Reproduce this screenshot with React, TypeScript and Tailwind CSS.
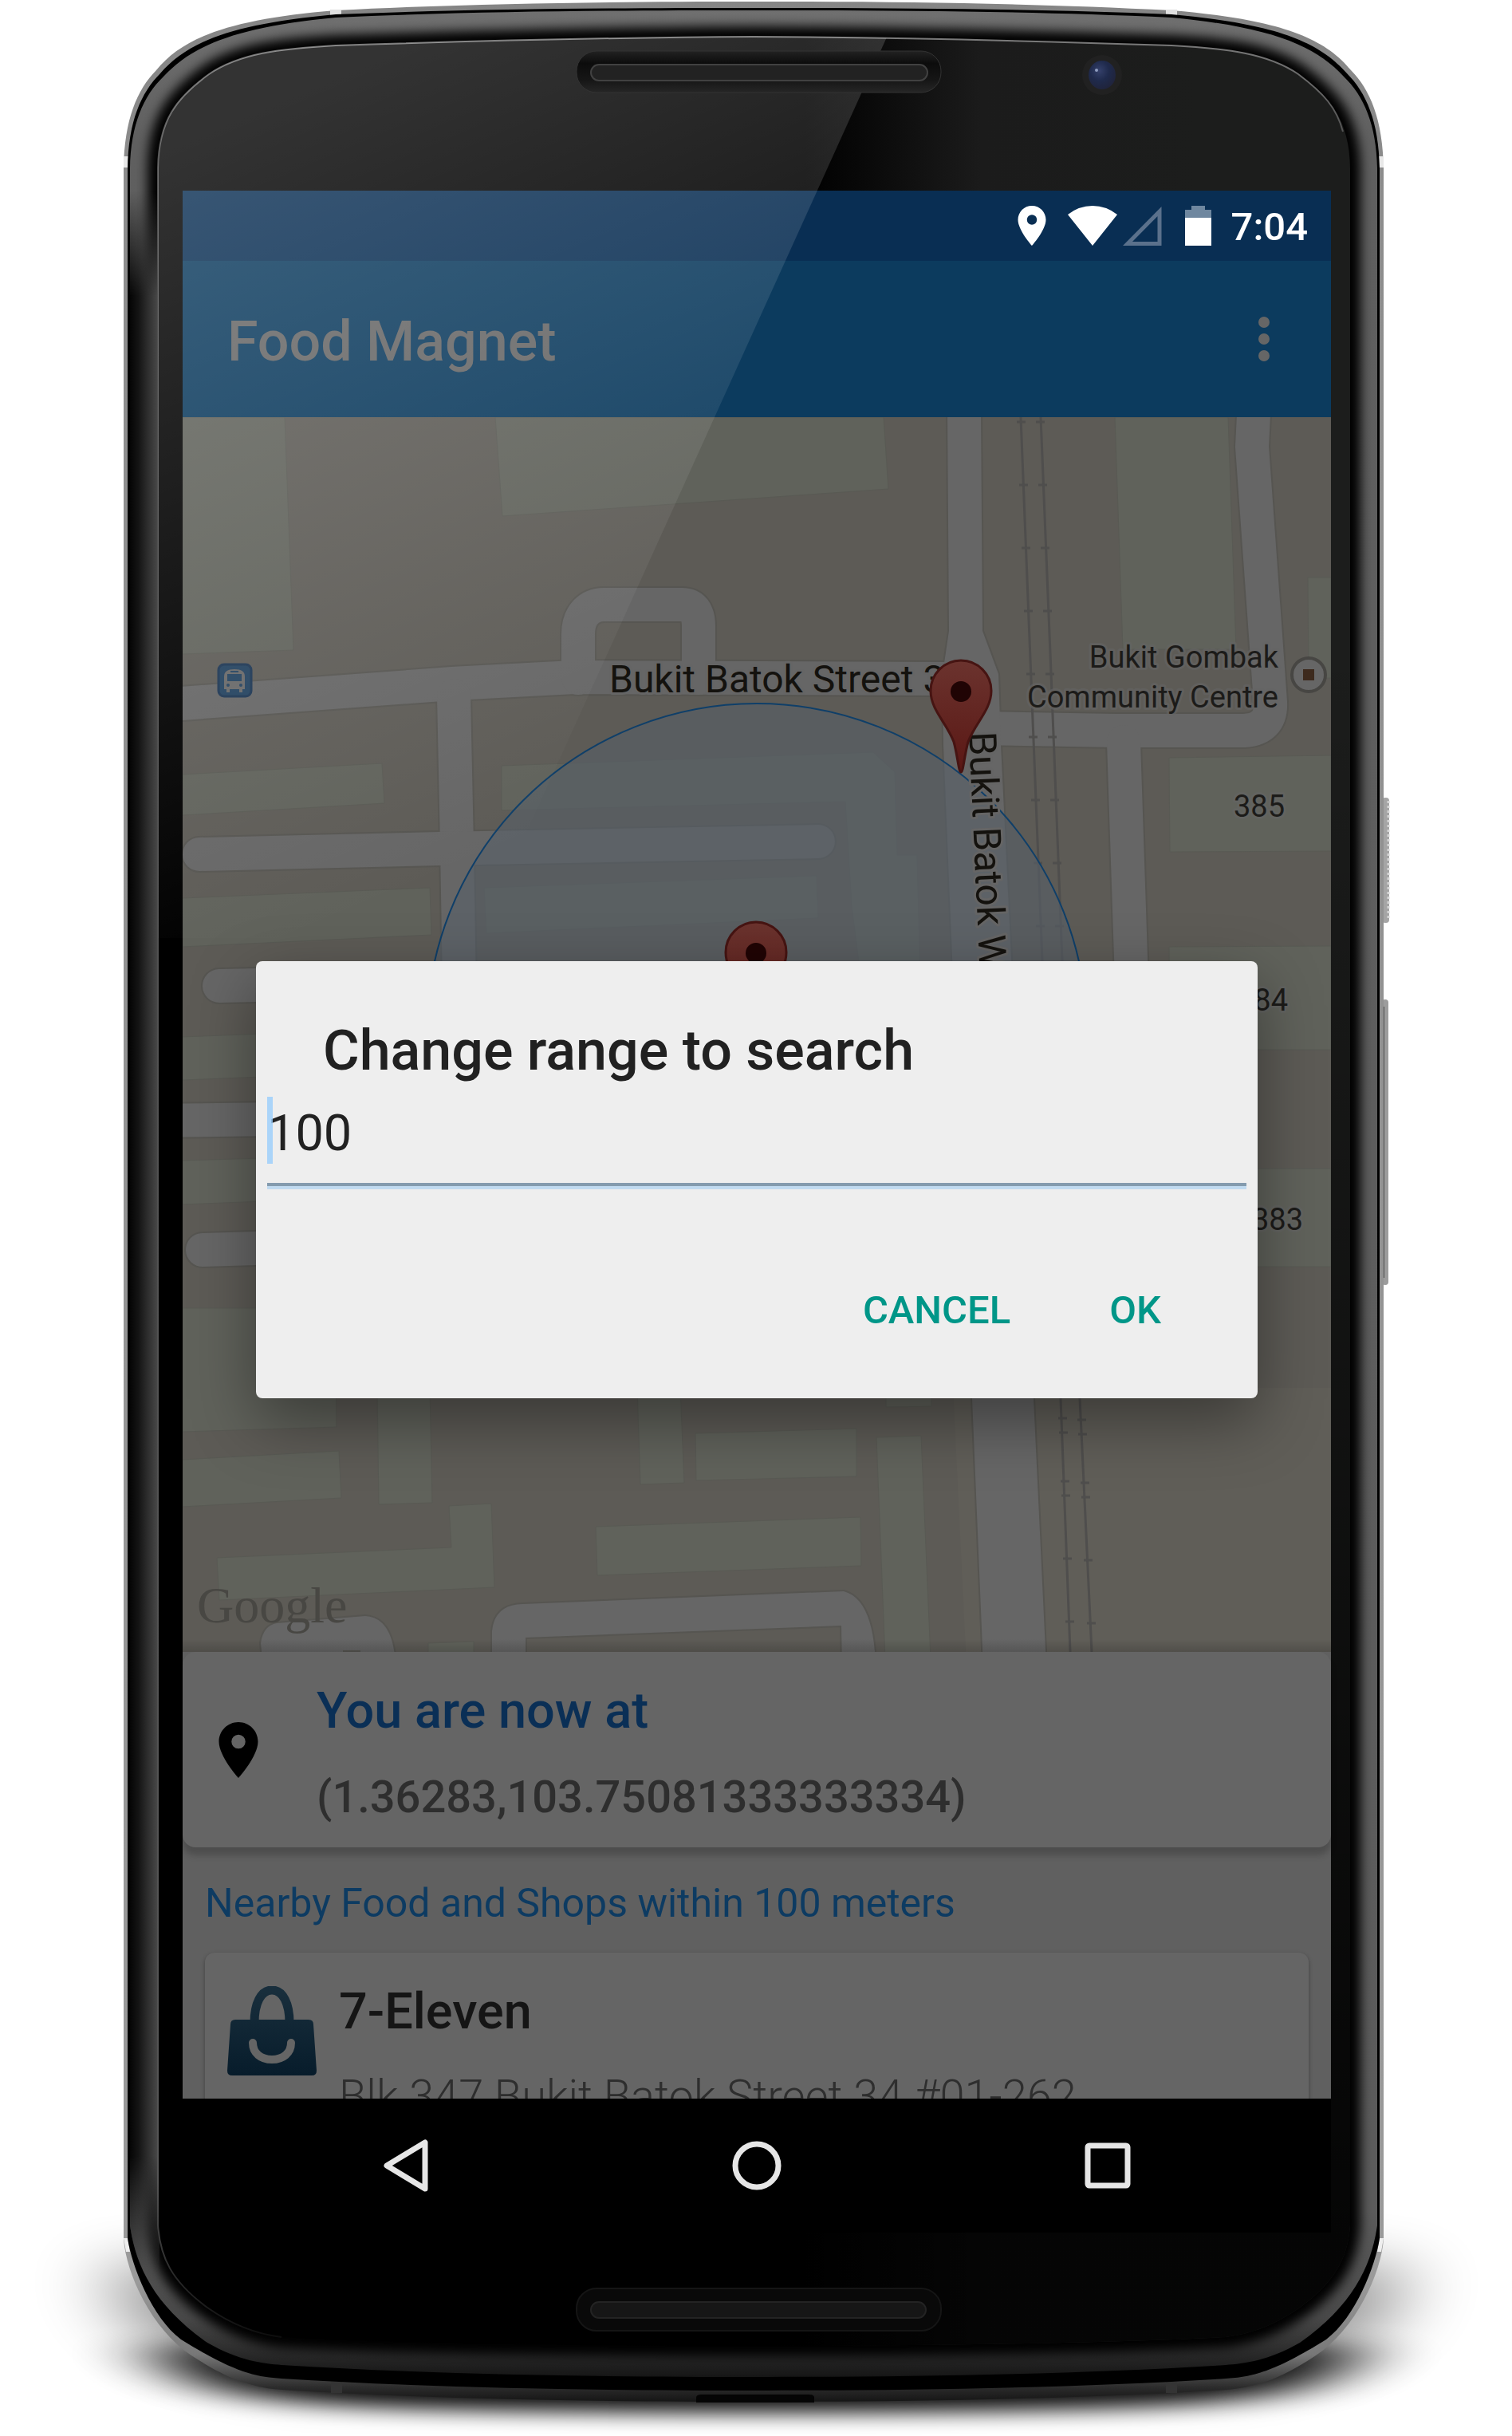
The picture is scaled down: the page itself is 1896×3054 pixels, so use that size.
import React, { useState } from "react";

const BODY =
  "M155 211C156 150 172 112 196 88C230 46 290 24 421 13C600 4 760 2 945 2C1130 2 1290 4 1469 13C1600 24 1660 46 1694 88C1718 112 1734 150 1735 211V2807C1732 2850 1700 2920 1650 2953C1600 2986 1572 2993 1537 2996C1350 3008 1130 3011 945 3011C760 3011 540 3008 353 2996C320 2993 290 2986 240 2953C190 2920 158 2850 155 2807Z";
const EDGE =
  "M160 211C161 152 177 116 201 92C236 52 290 30 421 18C600 11 760 10 945 10C1130 10 1290 11 1469 18C1600 30 1654 52 1689 92C1713 116 1729 152 1730 211V2806C1725 2840 1700 2905 1663 2933C1597 2974 1570 2980 1537 2982C1350 2994 1130 2997 945 2997C760 2997 540 2994 353 2982C320 2980 293 2974 227 2933C190 2905 165 2840 160 2806Z";
const RIM =
  "M163 211C164 156 180 120 205 96C240 58 294 34 421 22C600 14 760 13 945 13C1130 13 1290 14 1469 22C1596 34 1650 58 1685 96C1710 120 1726 156 1727 211V2790C1720 2840 1697 2890 1630 2937C1590 2960 1560 2963 1537 2965C1350 2977 1130 2980 945 2980C760 2980 540 2977 353 2965C330 2963 300 2960 260 2937C193 2890 170 2840 163 2790Z";
const GLASS =
  "M198 211C199 150 222 122 262 93C300 67 350 61 421 57C600 51 760 47 945 46C1130 47 1290 51 1469 57C1540 61 1590 67 1628 93C1668 122 1692 150 1693 211V2790C1690 2830 1675 2860 1630 2893C1600 2914 1570 2926 1537 2930C1400 2938 1130 2941 945 2941C760 2941 490 2938 353 2930C320 2926 290 2914 260 2893C215 2860 201 2830 198 2790Z";
const GLASS_HIGHLIGHT =
  "M353 2930C320 2926 290 2914 260 2893C215 2860 201 2830 198 2790V211C199 150 222 122 262 93C300 67 350 61 421 57C600 51 760 47 945 46C1130 47 1290 51 1469 57C1540 61 1590 67 1628 93C1660 117 1676 135 1684 165";

function PhoneShell() {
  return (
    <svg
      aria-hidden="true"
      className="absolute inset-0 size-full"
      viewBox="0 0 1896 3054"
      preserveAspectRatio="none"
    >
      <defs>
        <linearGradient id="metal" x1="0" y1="0" x2="0" y2="3012" gradientUnits="userSpaceOnUse">
          <stop offset="0" stopColor="#858585" />
          <stop offset="0.08" stopColor="#8d8d8d" />
          <stop offset="0.95" stopColor="#9a9a9a" />
          <stop offset="0.98" stopColor="#777" />
          <stop offset="0.994" stopColor="#2a2a2a" />
          <stop offset="1" stopColor="#141414" />
        </linearGradient>
        <linearGradient id="rim" x1="0" y1="0" x2="0" y2="2981" gradientUnits="userSpaceOnUse">
          <stop offset="0" stopColor="#717171" />
          <stop offset="0.06" stopColor="#5f5f5f" />
          <stop offset="0.93" stopColor="#5b5b5b" />
          <stop offset="0.975" stopColor="#484848" />
          <stop offset="1" stopColor="#151515" />
        </linearGradient>
        <linearGradient id="leftRim" x1="163" y1="0" x2="198" y2="0" gradientUnits="userSpaceOnUse">
          <stop offset="0" stopColor="#050505" />
          <stop offset="0.3" stopColor="#141414" />
          <stop offset="1" stopColor="#494949" />
        </linearGradient>
        <linearGradient id="leftFade" x1="0" y1="240" x2="0" y2="2860" gradientUnits="userSpaceOnUse">
          <stop offset="0" stopColor="#fff" stopOpacity="0" />
          <stop offset="0.05" stopColor="#fff" />
          <stop offset="0.94" stopColor="#fff" />
          <stop offset="1" stopColor="#fff" stopOpacity="0" />
        </linearGradient>
        <linearGradient id="glassX" x1="1010" y1="0" x2="1500" y2="0" gradientUnits="userSpaceOnUse">
          <stop offset="0" stopColor="#000" />
          <stop offset="0.45" stopColor="#1b1b1b" />
          <stop offset="1" stopColor="#1c1d1c" />
        </linearGradient>
        <linearGradient id="glassY" x1="0" y1="800" x2="0" y2="2800" gradientUnits="userSpaceOnUse">
          <stop offset="0" stopColor="#000" stopOpacity="0" />
          <stop offset="1" stopColor="#000" stopOpacity="0.82" />
        </linearGradient>
        <linearGradient id="edgeLine" x1="0" y1="0" x2="0" y2="2941" gradientUnits="userSpaceOnUse">
          <stop offset="0" stopColor="#8a8a8a" />
          <stop offset="0.06" stopColor="#505050" />
          <stop offset="0.93" stopColor="#555" />
          <stop offset="1" stopColor="#0a0a0a" />
        </linearGradient>
        <radialGradient id="lens" cx="0.4" cy="0.35" r="0.7">
          <stop offset="0" stopColor="#34406a" />
          <stop offset="0.5" stopColor="#1f2a4c" />
          <stop offset="1" stopColor="#20233a" />
        </radialGradient>
        <filter id="blurWide" x="-20%" y="-60%" width="140%" height="220%">
          <feGaussianBlur stdDeviation="48 32" />
        </filter>
        <filter id="blurNear" x="-20%" y="-60%" width="140%" height="220%">
          <feGaussianBlur stdDeviation="55 13" />
        </filter>
        <filter id="blurRim" x="-5%" y="-5%" width="110%" height="110%">
          <feGaussianBlur stdDeviation="7" />
        </filter>
        <clipPath id="rimClip">
          <path d={RIM} />
        </clipPath>
        <mask id="leftMask" maskUnits="userSpaceOnUse" x="150" y="200" width="60" height="2700">
          <rect x="150" y="240" width="60" height="2620" fill="url(#leftFade)" />
        </mask>
      </defs>

      <path
        d="M130 2840H1766C1750 2920 1700 2970 1500 2985H396C200 2970 150 2920 130 2840Z"
        fill="#000"
        opacity="0.42"
        filter="url(#blurWide)"
      />
      <path
        d="M200 2940H1696C1680 2990 1620 3010 1400 3018C1200 3026 700 3026 496 3018C280 3010 220 2990 200 2940Z"
        fill="#000"
        opacity="0.95"
        filter="url(#blurNear)"
      />

      <rect x="1733" y="1000" width="9" height="157" rx="4" fill="#a5a5a5" />
      <path d="M1741 1004V1154" stroke="#d5d5d5" strokeWidth="3" strokeDasharray="3 3" />
      <rect x="1733" y="1253" width="8" height="358" rx="4" fill="#9c9c9c" />
      <rect x="1733" y="1262" width="3" height="340" fill="#4d4d4d" />

      <path d={BODY} fill="url(#metal)" />
      <path d="M421 12V20M1469 12V20" stroke="#e0e0e0" strokeWidth="14" />
      <path d="M155 203H161M1729 203H1735" stroke="#e8e8e8" strokeWidth="14" />
      <path d="M155 2806L160 2806L163 2823L158 2823ZM1735 2806L1730 2806L1727 2823L1732 2823Z" fill="#eee" />
      <path d="M422 2986V3000M1469 2986V3000" stroke="#343434" strokeWidth="14" />
      <path d="M873 3012V3006Q873 3002 880 3002H1014Q1021 3002 1021 3006V3012Z" fill="#050505" />
      <path d={EDGE} fill="#000" />
      <path d={RIM} fill="url(#rim)" />
      <g clipPath="url(#rimClip)">
        <path d={GLASS} fill="#000" stroke="#000" strokeWidth="26" filter="url(#blurRim)" />
        <rect x="160" y="240" width="40" height="2620" fill="url(#leftRim)" mask="url(#leftMask)" />
      </g>
      <path d={GLASS} fill="url(#glassX)" />
      <path d={GLASS} fill="url(#glassY)" />
      <path d={GLASS_HIGHLIGHT} fill="none" stroke="url(#edgeLine)" strokeWidth="2" />

      <circle cx="1382" cy="94" r="25" fill="#212121" />
      <ellipse cx="1382" cy="94" rx="17" ry="18" fill="url(#lens)" />
      <circle cx="1375" cy="88" r="2" fill="#8e9cc0" />
    </svg>
  );
}

function Gloss() {
  return (
    <svg
      aria-hidden="true"
      className="pointer-events-none absolute inset-0 size-full"
      viewBox="0 0 1896 3054"
      preserveAspectRatio="none"
    >
      <defs>
        <linearGradient id="gloss" x1="229" y1="180" x2="612" y2="1080" gradientUnits="userSpaceOnUse">
          <stop offset="0" stopColor="#fff" stopOpacity="0.2" />
          <stop offset="1" stopColor="#fff" stopOpacity="0" />
        </linearGradient>
        <linearGradient id="slot" x1="0" y1="0" x2="0" y2="1">
          <stop offset="0" stopColor="#222" />
          <stop offset="0.3" stopColor="#0c0c0c" />
          <stop offset="0.7" stopColor="#161616" />
          <stop offset="1" stopColor="#262626" />
        </linearGradient>
        <clipPath id="glassClip">
          <path d={GLASS} />
        </clipPath>
      </defs>
      <path d="M190 40H1115L600 1176H190Z" fill="url(#gloss)" clipPath="url(#glassClip)" />
      <rect x="723" y="64" width="457" height="52" rx="25" fill="url(#slot)" stroke="#333" strokeWidth="1" />
      <rect x="741" y="81" width="422" height="20" rx="10" fill="#222" stroke="#414141" strokeWidth="2" />
      <rect x="723" y="2869" width="457" height="53" rx="25" fill="#090909" stroke="#151515" strokeWidth="2" />
      <rect x="741" y="2886" width="420" height="20" rx="10" fill="#161616" stroke="#232323" strokeWidth="2" />
    </svg>
  );
}

function PlaceIcon({ className }: { className: string }) {
  return (
    <svg aria-hidden="true" viewBox="5 2 14 20" className={className} fill="currentColor">
      <path d="M12 2C8.13 2 5 5.13 5 9c0 5.25 7 13 7 13s7-7.75 7-13c0-3.87-3.13-7-7-7zm0 9.5a2.5 2.5 0 0 1 0-5 2.5 2.5 0 0 1 0 5z" />
    </svg>
  );
}

function StatusBar() {
  return (
    <div className="flex h-[88px] items-center justify-end bg-[#092e53] pr-[29px] text-white">
      <PlaceIcon className="h-[50px] w-[36px]" />
      <svg aria-label="Wi-Fi" viewBox="0 0 62 50" className="ml-[27px] h-[50px] w-[62px]">
        <path d="M0 11Q14 0 31 0T62 11L31 50Z" fill="currentColor" />
      </svg>
      <svg aria-label="No signal" viewBox="0 0 50 50" className="ml-[6px] h-[50px] w-[50px]">
        <path d="M7 47.500H47V7Z" fill="none" stroke="#5b718c" strokeWidth="5" />
      </svg>
      <svg aria-label="Battery" viewBox="0 0 33 50" className="ml-[29px] h-[50px] w-[33px]">
        <path d="M8 0H25V5H33V15H0V5H8Z" fill="#6f879f" />
        <path d="M0 15H33V50H0Z" fill="currentColor" />
      </svg>
      <span className="ml-[25px] pt-1 text-[49px] leading-[56px] font-medium">7:04</span>
    </div>
  );
}

function AppBar() {
  return (
    <header className="flex h-[196px] items-center justify-between bg-[#0c3b5e] pr-[56px] pl-[56px] text-[#666]">
      <h1 className="pt-[6px] text-[70px] leading-[84px] font-medium">Food Magnet</h1>
      <button aria-label="More options" className="flex w-14 flex-col items-center gap-[7px]">
        <span className="size-[14px] rounded-full bg-current" />
        <span className="size-[14px] rounded-full bg-current" />
        <span className="size-[14px] rounded-full bg-current" />
      </button>
    </header>
  );
}

function MapPin({ x, y }: { x: number; y: number }) {
  return (
    <g transform={`translate(${x} ${y})`}>
      <path
        d="M0 0C-3 0 -4 -20 -9 -38C-18 -62 -38 -78 -38 -102A38 38 0 0 1 38 -102C38 -78 18 -62 9 -38C4 -20 3 0 0 0Z"
        fill="url(#pinFill)"
        stroke="#461412"
        strokeWidth="3"
      />
      <circle cy="-101" r="13" fill="#200404" />
    </g>
  );
}

const ROADS = [
  { d: "M200 884L567 857L720 849L1190 851", w: 42 },
  { d: "M725 850V795C725 770 740 758 757 758H855Q876 758 876 785V850", w: 42 },
  { d: "M569 872L573 1060L577 1300", w: 42 },
  { d: "M250 1071L551 1064L1026 1055", w: 42 },
  { d: "M275 1236L420 1233", w: 42 },
  { d: "M200 1405L420 1402", w: 42 },
  { d: "M254 1567L420 1562", w: 42 },
  { d: "M1230 913L1400 916L1560 916Q1595 914 1593 880L1570 560L1573 500", w: 42 },
  { d: "M1409 930L1420 1260", w: 42 },
];
const MAIN_ROAD =
  "M1188 510H1230L1232 791L1252 845L1255 934L1268 1200L1296 1753L1312 2090H1233L1219 1753L1194 1200L1183 934L1182 845L1190 791Z";
const LOWER_ROAD =
  "M617 2090V2045Q620 2012 655 2011L1058 1995Q1096 2005 1098 2090H1056L1055 2038L659 2053V2090Z";
const LOWER_LANE = "M327 2060Q330 2038 347 2035L458 2026Q494 2028 496 2090H330Z";

const PARKS = [
  "M229 523H357L368 815L229 820Z",
  "M621 523H1108L1114 613L630 647Z",
  "M229 971L479 957L482 1007L229 1022Z",
  "M229 1126L539 1113L541 1172L229 1187Z",
  "M629 960L1095 943L1122 968L1125 1072H1150L1154 1230H1080L1068 1136L1060 1005L629 1016Z",
  "M607 1113L1024 1098L1026 1151L610 1170Z",
  "M229 1300L330 1296V1350L229 1354Z",
  "M229 1455L330 1452V1506L229 1510Z",
  "M1398 523H1540L1550 814H1408Z",
  "M1640 724H1669V850H1641Z",
  "M1466 950L1669 947V1067L1467 1068Z",
  "M1466 1187L1669 1186V1316H1467Z",
  "M1500 1465H1669V1588H1500Z",
  "M229 1640H421L422 1789L229 1795Z",
  "M229 1830L425 1819L428 1878L229 1889Z",
  "M473 1740H539L542 1884L475 1886Z",
  "M799 1740H853L858 1859L803 1861Z",
  "M872 1797L1074 1791V1851L873 1856Z",
  "M563 1888L616 1885L620 1990L275 2006L272 1953L566 1940Z",
  "M747 1914L1079 1902L1080 1963L749 1975Z",
  "M1099 1802L1155 1800L1167 2080H1110Z",
  "M1111 1740H1168V1763L1111 1764Z",
  "M537 2060L594 2058V2080H537Z",
];

const TICKS = [0, 1, 2, 3, 4, 5, 6, 7, 8];
const LOWER_TICKS = [1778, 1796, 1857, 1875, 1954, 2033];

function MapView() {
  return (
    <svg
      role="img"
      aria-label="Map of Bukit Batok"
      className="block h-[1548px] w-full bg-[#5d5b56]"
      viewBox="229 523 1440 1548"
      preserveAspectRatio="xMidYMid slice"
    >
      <defs>
        <linearGradient id="pinFill" x1="0" y1="0" x2="0" y2="1">
          <stop offset="0" stopColor="#6b332e" />
          <stop offset="1" stopColor="#5a1714" />
        </linearGradient>
        <linearGradient id="cardShade" x1="0" y1="0" x2="0" y2="1">
          <stop offset="0" stopColor="#000" stopOpacity="0" />
          <stop offset="1" stopColor="#000" stopOpacity="0.16" />
        </linearGradient>
      </defs>

      <path d="M1195 1740H1669V2071H1211Z" fill="#605e58" />
      {PARKS.map((d) => (
        <path key={d} d={d} fill="#60625b" stroke="#595a54" strokeWidth="1" />
      ))}

      <g fill="none" stroke="#565551" strokeLinecap="round" strokeLinejoin="round">
        {ROADS.map((r) => (
          <path key={r.d} d={r.d} strokeWidth={r.w + 4} />
        ))}
        <path d={MAIN_ROAD} strokeWidth="4" />
        <path d={LOWER_ROAD} strokeWidth="4" />
        <path d={LOWER_LANE} strokeWidth="4" />
      </g>
      <g fill="none" stroke="#666" strokeLinecap="round" strokeLinejoin="round">
        {ROADS.map((r) => (
          <path key={r.d} d={r.d} strokeWidth={r.w} />
        ))}
      </g>
      <g fill="#666">
        <path d={MAIN_ROAD} />
        <path d={LOWER_ROAD} />
        <path d={LOWER_LANE} />
      </g>
      <path d="M452 2070H430" stroke="#565551" strokeWidth="2" />

      <g stroke="#4f4e4d" strokeWidth="3" fill="none">
        <path d="M1280 523L1307 1205L1330 1753L1342 2071" />
        <path d="M1305 523L1318 844L1332 1205L1354 1753L1369 2071" />
        {TICKS.map((i) => (
          <path key={i} d={`M${1275 + i * 3} ${529 + i * 79}h11M${1299 + i * 3} ${529 + i * 79}h11`} />
        ))}
        {LOWER_TICKS.map((y) => (
          <path
            key={y}
            d={`M${1326 + Math.round((y - 1753) / 27)} ${y}h11M${1350 + Math.round((y - 1753) / 22)} ${y + 2}h11`}
          />
        ))}
      </g>

      <circle cx="949" cy="1296" r="414" fill="#576067" fillOpacity="0.62" stroke="#0f3f69" strokeWidth="2" />

      <g
        fontFamily="Roboto, sans-serif"
        fill="#14120e"
        stroke="#656565"
        strokeWidth="6"
        strokeLinejoin="round"
        paintOrder="stroke"
      >
        <text x="764" y="868" fontSize="48">Bukit Batok Street 34</text>
        <text fontSize="48" transform="translate(1215 918) rotate(87.4)">Bukit Batok West</text>
        <g fontSize="38" fill="#1c1b19" strokeOpacity="0.6">
          <text x="1603" y="837" textAnchor="end">Bukit Gombak</text>
          <text x="1603" y="887" textAnchor="end">Community Centre</text>
          <text x="1611" y="1024" textAnchor="end">385</text>
          <text x="1615" y="1267" textAnchor="end">384</text>
          <text x="1634" y="1542" textAnchor="end">383</text>
        </g>
      </g>

      <MapPin x={1205} y={968} />
      <MapPin x={948} y={1296} />

      <circle cx="1641" cy="846" r="21" fill="#666" stroke="#474643" strokeWidth="4" />
      <rect x="1634" y="839" width="14" height="14" fill="#3d2a1d" />

      <rect x="274" y="833" width="41" height="40" rx="7" fill="#23425f" stroke="#1d3653" strokeWidth="3" />
      <path
        d="M281 848Q281 839 294 839T307 848V864H304V868H300V864H288V868H284V864H281Z"
        fill="#686868"
      />
      <path d="M285 845H303V854H285ZM289 841H299V843H289Z" fill="#23425f" />
      <circle cx="286" cy="859" r="2" fill="#23425f" />
      <circle cx="302" cy="859" r="2" fill="#23425f" />

      <text x="247" y="2034" fontSize="64" fontFamily="'Liberation Serif', serif" fill="#484743">
        Google
      </text>
      <rect x="229" y="2055" width="1440" height="16" fill="url(#cardShade)" />
    </svg>
  );
}

function LocationCard() {
  return (
    <section className="flex h-[245px] items-center rounded-2xl bg-[#656565] pl-[45px] shadow-[0_10px_8px_rgba(0,0,0,0.2)]">
      <PlaceIcon className="h-[70px] w-[50px] text-black" />
      <div className="flex flex-col gap-7 pt-[10px] pl-[73px] font-medium">
        <h2 className="text-[63px] leading-[80px] text-[#0a2f56]">You are now at</h2>
        <p className="text-[56px] leading-[80px] text-[#2e2e2e]">(1.36283,103.75081333333334)</p>
      </div>
    </section>
  );
}

function BagIcon() {
  return (
    <svg aria-hidden="true" viewBox="0 0 112 112" className="h-[112px] w-[112px] shrink-0">
      <defs>
        <linearGradient id="bag" x1="0" y1="0" x2="0" y2="112" gradientUnits="userSpaceOnUse">
          <stop offset="0" stopColor="#192f3d" />
          <stop offset="1" stopColor="#071c2b" />
        </linearGradient>
      </defs>
      <path d="M34 46C34 22 42 5 56 5S78 22 78 46" fill="none" stroke="url(#bag)" strokeWidth="11" />
      <path d="M10 42H102Q108 42 108 48L112 106Q112 112 106 112H6Q0 112 0 106L4 48Q4 42 10 42Z" fill="url(#bag)" />
      <path d="M32 71C32 84 42 92 56 92S80 84 80 71" fill="none" stroke="#656565" strokeWidth="10" strokeLinecap="round" />
    </svg>
  );
}

function NearbyList() {
  return (
    <section className="h-[315px] overflow-hidden px-7">
      <h2 className="pt-[40px] text-[50px] leading-[60px] text-[#0d3b62]">
        Nearby Food and Shops within 100 meters
      </h2>
      <article className="mt-8 flex h-[320px] items-start gap-7 rounded-xl bg-[#656565] px-7 pt-[42px] shadow-[0_2px_5px_rgba(0,0,0,0.35)]">
        <BagIcon />
        <div>
          <h3 className="-mt-[10px] text-[63px] leading-[84px] font-medium text-[#151515]">7-Eleven</h3>
          <p className="pt-7 text-[56px] leading-[72px] font-light text-[#2e2e2e]">
            Blk 347 Bukit Batok Street 34 #01-262
          </p>
        </div>
      </article>
    </section>
  );
}

function NavBar() {
  return (
    <nav className="flex h-[168px] items-center justify-center gap-[320px] bg-black text-[#e6e6e6]">
      <button aria-label="Back" className="w-[120px]">
        <svg viewBox="0 0 120 120" className="size-[120px]">
          <path d="M84 31V89L36 60Z" fill="none" stroke="currentColor" strokeWidth="7" strokeLinejoin="round" />
        </svg>
      </button>
      <button aria-label="Home" className="w-[120px]">
        <svg viewBox="0 0 120 120" className="size-[120px]">
          <circle cx="60" cy="60" r="27" fill="none" stroke="currentColor" strokeWidth="7" />
        </svg>
      </button>
      <button aria-label="Recent apps" className="w-[120px]">
        <svg viewBox="0 0 120 120" className="size-[120px]">
          <rect x="35" y="35" width="50" height="50" rx="2" fill="none" stroke="currentColor" strokeWidth="7" />
        </svg>
      </button>
    </nav>
  );
}

function RangeDialog() {
  const [range, setRange] = useState("100");
  return (
    <div className="absolute inset-x-0 top-[88px] bottom-[168px] z-20 flex items-center px-[92px]">
      <form
        role="dialog"
        aria-labelledby="range-title"
        className="w-full rounded-lg bg-[#eee] pt-[70px] pb-[60px] shadow-[0_28px_80px_rgba(0,0,0,0.4)]"
        onSubmit={(e) => e.preventDefault()}
      >
        <label id="range-title" htmlFor="range" className="block pl-[84px] text-[70px] leading-[84px] font-medium text-[#212121]">
          Change range to search
        </label>
        <div className="relative mx-[14px] mt-4 h-[116px] border-b-4 border-[#c0daf0]">
          <div className="h-full border-b-4 border-[#849bae]">
            <input
              id="range"
              inputMode="numeric"
              value={range}
              onChange={(e) => setRange(e.target.value)}
              className="block h-[92px] w-full bg-transparent text-[63px] leading-[92px] text-[#212121] outline-none"
            />
          </div>
          <span className="absolute top-0 left-0 h-[84px] w-[7px] bg-[#98cdfb]/80" />
        </div>
        <div className="mt-[102px] flex justify-end gap-[68px] pr-[121px] text-[49px] leading-[56px] font-medium text-[#009688]">
          <button type="button" className="py-[22px] pr-14">CANCEL</button>
          <button type="submit" className="py-[22px]">OK</button>
        </div>
      </form>
    </div>
  );
}

export default function App() {
  return (
    <main className="relative w-full overflow-hidden bg-white pt-[239px] pr-[227px] pb-[255px] pl-[229px] font-[Roboto,sans-serif]">
      <PhoneShell />
      <div className="relative flex flex-col bg-[#606060]">
        <StatusBar />
        <AppBar />
        <MapView />
        <LocationCard />
        <NearbyList />
        <NavBar />
      </div>
      <Gloss />
      <div className="pointer-events-none absolute inset-0 pt-[239px] pr-[227px] pb-[255px] pl-[229px]">
        <div className="pointer-events-auto relative h-full overflow-hidden">
          <RangeDialog />
        </div>
      </div>
    </main>
  );
}
